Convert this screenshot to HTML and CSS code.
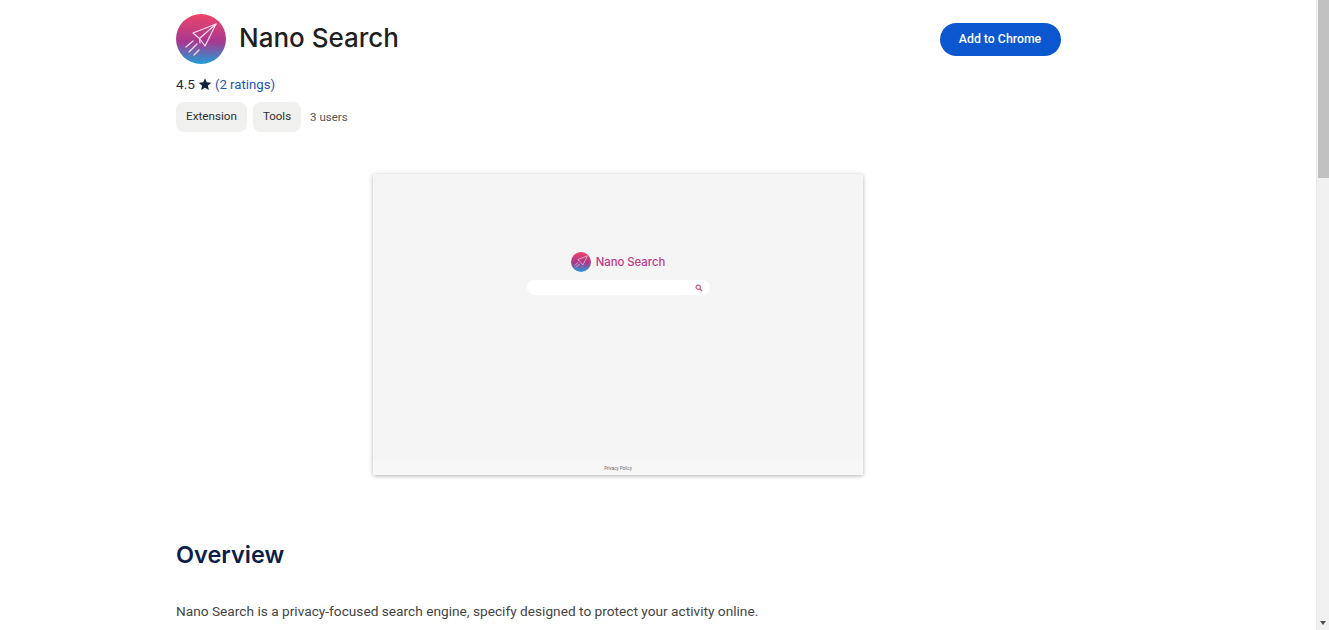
FILE: index.html
```html
<!DOCTYPE html>
<html lang="en">
<head>
    <meta charset="UTF-8">
    <meta name="viewport" content="width=device-width, initial-scale=1.0">
    <title>Nano Search</title>
    <link rel="stylesheet" href="styles.css">
</head>
<body>

    <main class="page">
        <header class="top">
            <div class="brand">
                <svg class="logo" viewBox="0 0 50 50">
                    <defs>
                        <linearGradient id="logoFill" x1="0" y1="0" x2="0" y2="1">
                            <stop offset="0" stop-color="#ee4468"/>
                            <stop offset="0.55" stop-color="#a8388f"/>
                            <stop offset="1" stop-color="#1f9fd8"/>
                        </linearGradient>
                    </defs>
                    <circle cx="25" cy="25" r="25" fill="url(#logoFill)"/>
                    <g fill="none" stroke="#fbdcea" stroke-width="1.200" stroke-linejoin="round" stroke-linecap="round">
                        <path d="M40 10 L17 19 L23.500 24.500 L29 32 Z"/>
                        <path d="M40 10 L23.500 24.500 L24 29"/>
                        <path d="M17 27 L10 33"/>
                        <path d="M21 30 L13 38"/>
                        <path d="M23 36 L18 41"/>
                    </g>
                </svg>
                <h1>Nano Search</h1>
            </div>
            <button type="button" class="add-btn">Add to Chrome</button>
        </header>

        <div class="rating">
            4.5
            <svg class="star" viewBox="0 0 24 24"><path d="M12 2 L15 9 L22.800 9.700 L16.900 14.800 L18.700 22.400 L12 18.400 L5.300 22.400 L7.100 14.800 L1.200 9.700 L9 9 Z"/></svg>
            <a href="#">(2 ratings)</a>
        </div>

        <div class="tags">
            <span class="tag">Extension</span>
            <span class="tag tag-short">Tools</span>
            <span class="users">3 users</span>
        </div>

        <div class="shot-wrap">
            <div class="shot">
                <div class="shot-body">
                    <div class="shot-brand">
                        <svg class="shot-logo" viewBox="0 0 50 50">
                            <circle cx="25" cy="25" r="25" fill="url(#logoFill)"/>
                            <g fill="none" stroke="#fbdcea" stroke-width="1.500" stroke-linejoin="round" stroke-linecap="round">
                                <path d="M40 10 L17 19 L23.500 24.500 L29 32 Z"/>
                                <path d="M17 27 L10 33"/>
                                <path d="M21 30 L13 38"/>
                            </g>
                        </svg>
                        <span>Nano Search</span>
                    </div>
                    <div class="shot-search">
                        <svg class="shot-icon" viewBox="0 0 10 10" fill="none" stroke="#c2497f" stroke-width="1.300">
                            <circle cx="4" cy="4" r="2.700"/>
                            <path d="M6 6 L9 9"/>
                        </svg>
                    </div>
                </div>
                <div class="shot-foot">Privacy Policy</div>
            </div>
        </div>

        <h2>Overview</h2>
        <p class="desc">Nano Search is a privacy-focused search engine, specify designed to protect your activity online.</p>
    </main>

    <div class="scrollbar">
        <div class="thumb"></div>
        <div class="arrow"></div>
    </div>

</body>
</html>
```

FILE: styles.css
```css
html, body {
    height: 100%;
}

body {
    font-family: 'Roboto', 'Liberation Sans', sans-serif;
    background-color: white;
    margin: 0;
    display: flex;
    overflow: hidden;
    color: #1f1f1f;
}

.page {
    flex: 1;
    padding: 14px 0 0 176px;
    overflow: hidden;
}

.top {
    width: 884.500px;
    display: flex;
    justify-content: space-between;
    align-items: flex-start;
}

.brand {
    display: flex;
    align-items: center;
    gap: 13px;
}

.logo {
    width: 50px;
    height: 50px;
    display: block;
}

h1 {
    margin: 0;
    padding-bottom: 2px;
    font-family: 'Inter', sans-serif;
    font-size: 26px;
    font-weight: 500;
    line-height: 46px;
    color: #1f1f1f;
}

.add-btn {
    width: 121px;
    height: 33px;
    margin-top: 9px;
    padding: 0 0 2px;
    background-color: #0b57d0;
    color: white;
    border: none;
    border-radius: 17px;
    font-family: 'Roboto', sans-serif;
    font-size: 12.300px;
    font-weight: 500;
}

.rating {
    margin-top: 10px;
    height: 20px;
    display: flex;
    align-items: center;
    gap: 3px;
    font-size: 13.600px;
    color: #1f2a44;
}

.star {
    width: 14px;
    height: 14px;
    fill: #14213d;
}

.rating a {
    color: #1a56b0;
    font-size: 13.200px;
    text-decoration: none;
}

.tags {
    margin-top: 8px;
    display: flex;
    align-items: center;
    gap: 6px;
    font-size: 11.700px;
}

.tag {
    padding: 0 10px;
    height: 30px;
    line-height: 29px;
    background-color: #f0f1ef;
    border-radius: 8px;
    color: #2f2f2f;
}

.tag-short {
    font-size: 11.500px;
}

.users {
    margin-left: 3px;
    font-size: 11.500px;
    color: #555;
}

.shot-wrap {
    margin-top: 42px;
    width: 885px;
    padding-left: 197px;
    box-sizing: border-box;
}

.shot {
    width: 490px;
    height: 301px;
    background-color: #f5f5f5;
    border-radius: 2px;
    box-shadow: 0 1px 4px rgba(0, 0, 0, 0.3);
    display: flex;
    flex-direction: column;
}

.shot-body {
    flex: 1;
    padding-top: 78px;
    display: flex;
    flex-direction: column;
    align-items: center;
    box-sizing: border-box;
}

.shot-brand {
    display: flex;
    align-items: center;
    gap: 5px;
    font-family: 'Inter', sans-serif;
    font-size: 11.300px;
    font-weight: 500;
    color: #c2378a;
}

.shot-logo {
    width: 20px;
    height: 20px;
}

.shot-search {
    margin-top: 8px;
    width: 183px;
    height: 15px;
    background-color: white;
    border-radius: 8px;
    display: flex;
    align-items: center;
    justify-content: flex-end;
    padding-right: 7px;
    box-sizing: border-box;
}

.shot-icon {
    width: 8px;
    height: 8px;
}

.shot-foot {
    height: 15px;
    line-height: 17px;
    background-color: #f7f7f7;
    text-align: center;
    font-size: 4.500px;
    color: #666;
}

h2 {
    margin: 65px 0 0;
    font-family: 'Inter', sans-serif;
    font-size: 23.500px;
    font-weight: 600;
    line-height: 30px;
    color: #0c1f4a;
}

.desc {
    margin: 31px 0 0;
    font-size: 13.700px;
    line-height: 20px;
    color: #444;
}

.scrollbar {
    width: 13px;
    height: 100%;
    background-color: #f1f1f1;
    border-left: 1px solid #e8e8e8;
    box-sizing: border-box;
    display: flex;
    flex-direction: column;
    align-items: center;
    justify-content: space-between;
}

.thumb {
    width: 11px;
    height: 178px;
    background-color: #c1c1c1;
}

.arrow {
    width: 0;
    height: 0;
    margin-bottom: 5px;
    border-left: 3.500px solid transparent;
    border-right: 3.500px solid transparent;
    border-top: 4px solid #505050;
}
```
